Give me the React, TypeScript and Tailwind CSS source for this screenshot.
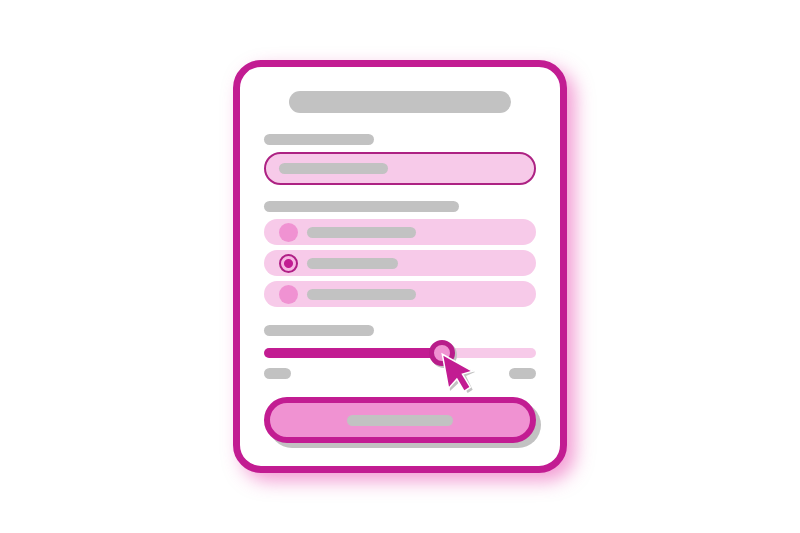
import { useState } from 'react'
import clsx from 'clsx'

const options = [
  { id: 'first', bar: 'w-[109px]' },
  { id: 'second', bar: 'w-[91px]' },
  { id: 'third', bar: 'w-[109px]' },
]

function Bar({ className }: { className?: string }) {
  return <span className={clsx('block h-[11px] shrink-0 rounded-full bg-[#c2c2c2]', className)} />
}

function Pointer() {
  return (
    <svg className="h-[42px] w-9" viewBox="120 126 108 126" aria-hidden="true">
      <path
        d="M140 142L225 186L198 198L218 239L203 249L181 214L150 243Z"
        fill="#c2c2c2"
      />
      <path
        d="M130 137L212 183L184 191L208 231L193 241L171 203L147 230Z"
        fill="#c21c92"
        stroke="#fff"
        strokeWidth="9"
        paintOrder="stroke"
      />
    </svg>
  )
}

export default function App() {
  const [text, setText] = useState('')
  const [selected, setSelected] = useState('second')
  const [amount, setAmount] = useState(67)

  // The thumb is 26px wide, so its centre travels from 13px to 100% - 13px
  const thumbCentre = `calc(13px + (100% - 26px) * ${amount / 100})`

  return (
    <main className="flex min-h-screen items-center justify-center bg-white font-['Liberation_Sans',sans-serif]">
      <form
        className="flex w-full max-w-[334px] flex-col rounded-[28px] border-[7px] border-[#c21c92] bg-white px-6 pt-6 pb-[23px] shadow-[8px_8px_18px_rgba(232,60,170,0.5)]"
        onSubmit={(e) => e.preventDefault()}
      >
        <span className="mb-[21px] block h-[22px] w-[222px] self-center rounded-full bg-[#c2c2c2]" />

        <label htmlFor="text" className="mb-[7px]">
          <Bar className="w-[110px]" />
        </label>
        <div className="mb-4 flex h-[33px] items-center rounded-full border-2 border-[#ad2283] bg-[#f7cae9] pl-[13px]">
          <Bar className="w-[109px]" />
          <input
            id="text"
            type="text"
            aria-label="Text"
            className="h-full min-w-0 flex-1 rounded-r-full bg-transparent px-2 text-sm text-[#c21c92] outline-none"
            value={text}
            onChange={(e) => setText(e.target.value)}
          />
        </div>

        <fieldset className="mb-[18px]" aria-label="Options">
          <Bar className="mb-[7px] w-[195px]" />
          <div className="flex flex-col gap-[5px]">
            {options.map((o) => (
              <label
                key={o.id}
                className="flex h-[26px] items-center gap-[9px] rounded-full bg-[#f7cae9] pl-[15px]"
              >
                <input
                  type="radio"
                  name="option"
                  aria-label={o.id}
                  checked={selected === o.id}
                  onChange={() => setSelected(o.id)}
                  className="size-[19px] shrink-0 appearance-none rounded-full bg-[#f092d2] checked:border-2 checked:border-[#b01f86] checked:bg-[radial-gradient(circle,#c21c92_4px,#f7b5e2_5px)]"
                />
                <Bar className={clsx('mt-px', o.bar)} />
              </label>
            ))}
          </div>
        </fieldset>

        <label htmlFor="amount" className="mb-1">
          <Bar className="w-[110px]" />
        </label>
        <div className="relative mb-0.5 h-[26px]">
          <div
            className="absolute inset-x-0 top-2 h-[10px] rounded-full"
            style={{
              background: `linear-gradient(to right, #c21c92 ${thumbCentre}, #f7cae9 ${thumbCentre})`,
            }}
          />
          <input
            id="amount"
            type="range"
            aria-label="Amount"
            min={0}
            max={100}
            value={amount}
            onChange={(e) => setAmount(Number(e.target.value))}
            className="relative block h-[26px] w-full cursor-pointer appearance-none bg-transparent [&::-webkit-slider-thumb]:size-[26px] [&::-webkit-slider-thumb]:appearance-none [&::-webkit-slider-thumb]:rounded-full [&::-webkit-slider-thumb]:border-[5px] [&::-webkit-slider-thumb]:border-[#b81c8a] [&::-webkit-slider-thumb]:bg-[#f092d2] [&::-webkit-slider-thumb]:shadow-[2px_2px_0_#c2c2c2]"
          />
          <div
            className="pointer-events-none absolute top-3 z-10 -ml-0.5"
            style={{ left: thumbCentre }}
          >
            <Pointer />
          </div>
        </div>
        <div className="mb-[18px] flex justify-between">
          <Bar className="w-[27px]" />
          <Bar className="w-[27px]" />
        </div>

        <button
          type="submit"
          aria-label="Submit"
          className="flex h-[46px] items-center justify-center rounded-full border-[6px] border-[#c21c92] bg-[#f092d2] shadow-[5px_5px_0_#c2c2c2]"
        >
          <Bar className="w-[106px]" />
        </button>
      </form>
    </main>
  )
}
